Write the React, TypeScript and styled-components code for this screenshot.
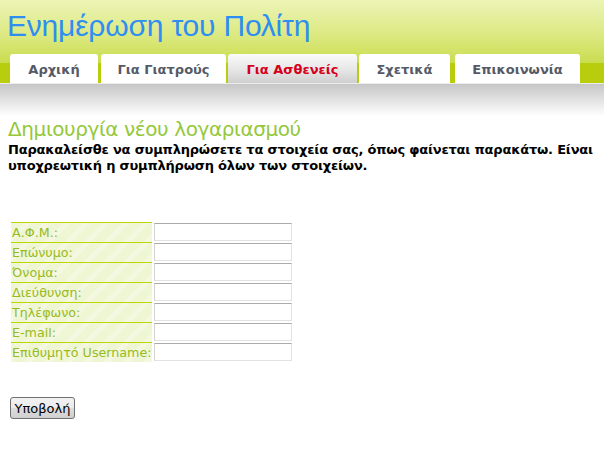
import React from 'react'
import styled, { createGlobalStyle } from 'styled-components'

const GlobalStyle = createGlobalStyle`
  body {
    margin: 0;
    background: #fff;
    font-family: 'DejaVu Sans', Verdana, sans-serif;
  }
`

const Header = styled.div`
  height: 83px;
  display: flex;
  flex-direction: column;
  background: linear-gradient(to bottom, #ecf4b6 0%, #dbe87e 45%, #c8dc4c 78%, #c2d640 100%);
`

const Title = styled.h1`
  margin: 0;
  height: 54px;
  padding: 6px 0 0 7px;
  box-sizing: border-box;
  font-family: 'Liberation Sans', Tahoma, sans-serif;
  font-weight: normal;
  font-size: 30px;
  letter-spacing: -0.2px;
  color: #2e8ef2;
  line-height: 40px;
`

const TabBar = styled.div`
  flex: 1;
  display: flex;
  align-items: stretch;
  padding-left: 10px;
  background: linear-gradient(to bottom, transparent 9px, #b8cd0e 9px);
`

const Tab = styled.a<{ $width: number; $gap: number; $active?: boolean }>`
  width: ${(p) => p.$width}px;
  margin-right: ${(p) => p.$gap}px;
  display: flex;
  align-items: center;
  justify-content: center;
  border-radius: 3px 3px 0 0;
  font-family: 'DejaVu Sans', Tahoma, sans-serif;
  font-size: 13px;
  font-weight: bold;
  text-decoration: none;
  padding-top: 2px;
  box-sizing: border-box;
  color: ${(p) => (p.$active ? '#d4001c' : '#555a66')};
  background: ${(p) =>
    p.$active ? 'linear-gradient(to bottom, #fbfbfb 0%, #e6e6e6 55%, #cfcfcf 100%)' : '#fff'};
`

const Shade = styled.div`
  height: 32px;
  border-top: 1px solid #ececec;
  background: linear-gradient(to bottom, #c6c6c6 0%, #e2e2e2 50%, #ffffff 100%);
`

const Content = styled.div`
  padding: 0 8px;
`

const Heading = styled.h2`
  margin: 0;
  font-family: 'DejaVu Sans', Tahoma, sans-serif;
  font-weight: normal;
  font-size: 20px;
  letter-spacing: -0.4px;
  line-height: 26px;
  color: #94c83a;
`

const Intro = styled.p`
  margin: 0;
  font-size: 13px;
  font-weight: bold;
  line-height: 16px;
  letter-spacing: -0.2px;
  color: #000;
`

const Form = styled.form`
  margin-top: 48px;
`

const FieldGrid = styled.div`
  margin-left: 3px;
  display: grid;
  grid-template-columns: 141px 138px;
  grid-auto-rows: 20px;
  column-gap: 2px;
`

const Label = styled.label`
  border-top: 1px solid #bcd600;
  padding-left: 1px;
  font-size: 12.7px;
  line-height: 19px;
  color: #98ba1e;
  white-space: nowrap;
  background: repeating-linear-gradient(
    135deg,
    #eff6d4 0px,
    #eff6d4 9px,
    #f4f8e0 9px,
    #f4f8e0 14px
  );
`

const Input = styled.input`
  box-sizing: border-box;
  width: 138px;
  height: 18px;
  margin: 1px 0 0;
  padding: 0 2px;
  border: 1px solid #e2e2e2;
  border-top-color: #ababab;
  border-left-color: #d4d4d4;
  font-size: 12px;
  background: #fff;
`

const SubmitButton = styled.button`
  margin: 35px 0 0 2px;
  height: 22px;
  width: 65px;
  padding: 0;
  border: 1px solid #707070;
  border-radius: 3px;
  background: linear-gradient(to bottom, #f2f2f2 0%, #ebebeb 50%, #dddddd 51%, #cfcfcf 100%);
  font-family: 'DejaVu Sans', Tahoma, sans-serif;
  font-size: 13px;
  color: #000;
`

const tabs = [
  { label: 'Αρχική', width: 88, gap: 3 },
  { label: 'Για Γιατρούς', width: 125, gap: 2 },
  { label: 'Για Ασθενείς', width: 129, gap: 2, active: true },
  { label: 'Σχετικά', width: 91, gap: 5 },
  { label: 'Επικοινωνία', width: 125, gap: 0 },
]

const fields = [
  'Α.Φ.Μ.:',
  'Επώνυμο:',
  'Όνομα:',
  'Διεύθυνση:',
  'Τηλέφωνο:',
  'E-mail:',
  'Επιθυμητό Username:',
]

const App = () => {
  return (
    <>
      <GlobalStyle />
      <Header>
        <Title>Ενημέρωση του Πολίτη</Title>
        <TabBar>
          {tabs.map((tab) => (
            <Tab key={tab.label} href="#" $width={tab.width} $gap={tab.gap} $active={tab.active}>
              {tab.label}
            </Tab>
          ))}
        </TabBar>
      </Header>
      <Shade />
      <Content>
        <Heading>Δημιουργία νέου λογαριασμού</Heading>
        <Intro>
          Παρακαλείσθε να συμπληρώσετε τα στοιχεία σας, όπως φαίνεται παρακάτω. Είναι
          υποχρεωτική η συμπλήρωση όλων των στοιχείων.
        </Intro>
        <Form onSubmit={(e) => e.preventDefault()}>
          <FieldGrid>
            {fields.map((field, index) => (
              <React.Fragment key={index}>
                <Label htmlFor={'field' + index}>{field}</Label>
                <Input id={'field' + index} type="text" />
              </React.Fragment>
            ))}
          </FieldGrid>
          <SubmitButton type="submit">Υποβολή</SubmitButton>
        </Form>
      </Content>
    </>
  )
}

export default App
